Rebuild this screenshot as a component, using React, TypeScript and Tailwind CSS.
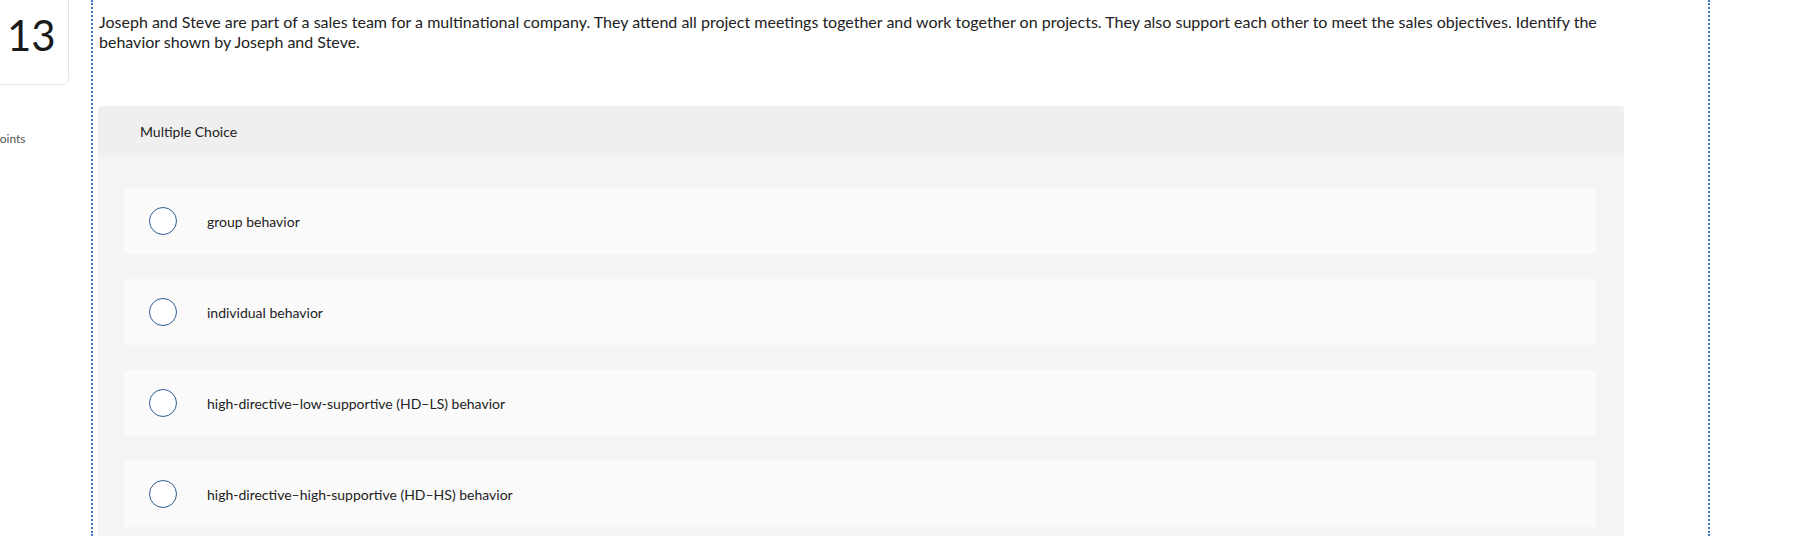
import React from 'react';

const options = [
    'group behavior',
    'individual behavior',
    'high-directive\u2013low-supportive (HD\u2013LS) behavior',
    'high-directive\u2013high-supportive (HD\u2013HS) behavior',
];

const OptionRow: React.FC<{ label: string }> = ({ label }) => (
    <label className="flex items-center h-[66px] rounded-[4px] bg-[#fafafa] pl-[25px] cursor-pointer">
        <span className="w-[28px] h-[28px] rounded-full border-[1.5px] border-[#2f5d8e] bg-white shrink-0" />
        <span className="ml-[30px] text-[14px] text-[#222]">{label}</span>
    </label>
);

export default function App() {
    return (
        <div
            className="flex h-[536px] w-[1808px] overflow-hidden bg-white text-[#1d1d1d]"
            style={{ fontFamily: 'Lato, "Open Sans", sans-serif' }}
        >
            {/* question number column */}
            <div className="w-[91px] shrink-0">
                <div className="-ml-[40px] -mt-[10px] w-[109px] h-[95px] rounded-[6px] border border-[#e6e6e6] bg-white flex items-end pb-[28px] pl-[46px]">
                    <span className="text-[42px] leading-none font-normal text-[#1a1a1a]">13</span>
                </div>
                <div className="mt-[45px] -ml-[7px] text-[12px] text-[#555]">points</div>
            </div>

            {/* question body */}
            <div className="w-[1619px] shrink-0 border-l-2 border-r-2 border-dotted border-[#3b78c4] pl-[5px] pt-[12px]">
                <div className="w-[1526px]">
                    <p className="text-[16px] leading-[20px] text-[#222] pl-[1px]">
                        Joseph and Steve are part of a sales team for a multinational company. They attend all project meetings together and work together on projects. They also support each other to meet the sales objectives. Identify the behavior shown by Joseph and Steve.
                    </p>

                    <div className="mt-[54px] rounded-t-[4px] overflow-hidden">
                        <div className="h-[50px] bg-[#efefef] flex items-center pl-[42px] text-[14px] text-[#222]">
                            Multiple Choice
                        </div>
                        <div className="bg-[#f4f4f4] pt-[32px] pb-[32px] pl-[26px] pr-[28px] flex flex-col gap-[25px]">
                            {options.map((o) => (
                                <OptionRow key={o} label={o} />
                            ))}
                        </div>
                    </div>
                </div>
            </div>
        </div>
    );
}
